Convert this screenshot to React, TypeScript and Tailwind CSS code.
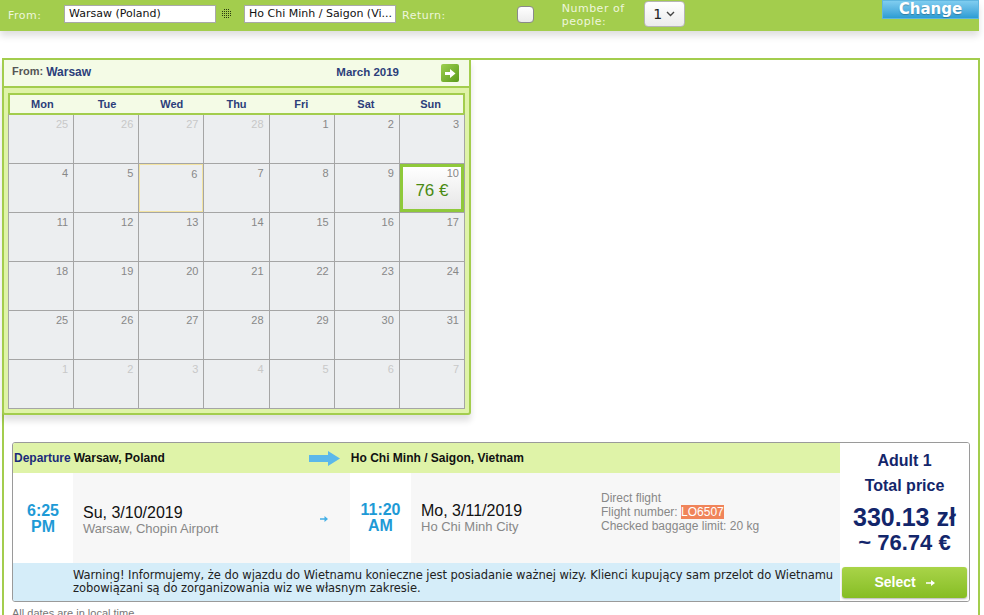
const verdana = "font-['DejaVu_Sans',Verdana,sans-serif]";
const arial = "font-['Liberation_Sans',Arial,sans-serif]";

const dayNames = ["Mon", "Tue", "Wed", "Thu", "Fri", "Sat", "Sun"];

type Day = { n: number; other?: boolean; price?: string; today?: boolean };

const weeks: Day[][] = [
  [{ n: 25, other: true }, { n: 26, other: true }, { n: 27, other: true }, { n: 28, other: true }, { n: 1 }, { n: 2 }, { n: 3 }],
  [{ n: 4 }, { n: 5 }, { n: 6, today: true }, { n: 7 }, { n: 8 }, { n: 9 }, { n: 10, price: "76 €" }],
  [{ n: 11 }, { n: 12 }, { n: 13 }, { n: 14 }, { n: 15 }, { n: 16 }, { n: 17 }],
  [{ n: 18 }, { n: 19 }, { n: 20 }, { n: 21 }, { n: 22 }, { n: 23 }, { n: 24 }],
  [{ n: 25 }, { n: 26 }, { n: 27 }, { n: 28 }, { n: 29 }, { n: 30 }, { n: 31 }],
  [{ n: 1, other: true }, { n: 2, other: true }, { n: 3, other: true }, { n: 4, other: true }, { n: 5, other: true }, { n: 6, other: true }, { n: 7, other: true }],
];

function SwapDots() {
  const dots: [number, number][] = [];
  for (let y = 0; y < 5; y++) {
    for (let x = 0; x < 5; x++) {
      if (Math.abs(x - 2) + Math.abs(y - 2) <= 3) dots.push([x, y]);
    }
  }
  return (
    <svg width="11" height="11" viewBox="0 0 11 11">
      {dots.map(([x, y]) => (
        <rect key={`${x}-${y}`} x={1 + x * 2} y={1 + y * 2} width="1" height="1" fill="#2b3a10" />
      ))}
    </svg>
  );
}

function TopBar() {
  return (
    <div className={`${verdana} relative h-[31px] w-[979px] bg-[#a3cd4d] text-[11px] shadow-[0_5px_7px_rgba(0,0,0,0.13)]`}>
      <div className="flex h-full items-start pt-[5px]">
        <span className="ml-[8px] mt-[3px] w-[56px] tracking-[0.5px] text-[#eef6dc]">From:</span>
        <div className="flex h-[18px] w-[152px] items-center border border-[#a9a9a9] bg-white pl-[4px] text-[#111]">Warsaw (Poland)</div>
        <div className="mx-[5px] mt-[3px] w-[18px]">
          <SwapDots />
        </div>
        <div className="flex h-[18px] w-[152px] items-center border border-[#a9a9a9] bg-white pl-[4px] text-[#111]">Ho Chi Minh / Saigon (Vi...</div>
        <span className="ml-[6px] mt-[3px] tracking-[0.5px] text-[#eef6dc]">Return:</span>
        <div className="ml-[71px] mt-[1px] h-[17px] w-[17px] rounded-[4px] border border-[#8a8a8a] bg-gradient-to-b from-white to-[#ececec]" />
        <span className="ml-[28px] -mt-[3px] w-[70px] leading-[13px] tracking-[0.5px] text-[#eef6dc]">Number of people:</span>
        <div className="ml-[12px] -mt-[4px] flex h-[26px] w-[41px] items-center justify-center gap-[4px] rounded-[4px] border border-[#b5b5b5] bg-gradient-to-b from-white to-[#ececec] text-[14px] text-[#222]">
          <span>1</span>
          <svg width="9" height="6" viewBox="0 0 9 6">
            <path d="M1 1l3.5 3.5L8 1" fill="none" stroke="#444" strokeWidth="1.4" />
          </svg>
        </div>
        <div className="ml-auto -mt-[5px] flex h-[19px] w-[97px] items-center justify-center border border-[#5fb6e0] bg-gradient-to-b from-[#7fcdf0] to-[#2a9dd4] text-[15px] font-bold text-white [text-shadow:0_1px_1px_rgba(0,0,0,0.25)]">
          Change
        </div>
      </div>
    </div>
  );
}

function Calendar() {
  return (
    <div className={`${arial} -ml-[2px] -mt-[2px] w-[469px] rounded-b-[3px] border-2 border-[#a3cd4d] bg-[#dff3a8] shadow-[0_6px_6px_rgba(0,0,0,0.12)]`}>
      <div className="flex h-[28px] items-center border-b-2 border-[#a3cd4d] bg-[#f4fbe6] pl-[8px] pr-[10px]">
        <span className="-mt-[3px] text-[11px] font-bold text-[#555]">From: </span>
        <span className="-mt-[3px] ml-[3px] text-[12px] font-bold text-[#2c3e7a]">Warsaw</span>
        <span className="ml-auto text-[11.5px] font-bold text-[#2c3e7a]">March 2019</span>
        <div className="ml-[42px] flex h-[18px] w-[18px] items-center justify-center rounded-[2px] bg-gradient-to-br from-[#9ed04e] to-[#5a9a1a]">
          <svg width="11" height="9" viewBox="0 0 11 9">
            <path d="M0 3h5V0l5.5 4.5L5 9V6H0z" fill="white" />
          </svg>
        </div>
      </div>
      <div className="px-[4px] pb-[4px] pt-[5px]">
        <div className="grid h-[20px] grid-cols-7 items-center border-2 border-b-0 border-[#a3cd4d] bg-[#f4fbe6] text-center text-[11px] font-bold text-[#2c3e7a]">
          {dayNames.map((d) => (
            <span key={d}>{d}</span>
          ))}
        </div>
        <div className="grid grid-cols-7 gap-px border border-t-2 border-[#a5a5a5] border-t-[#a3cd4d] bg-[#a5a5a5]">
          {weeks.flat().map((d, i) =>
            d.price ? (
              <div key={i} className="flex h-[48px] flex-col border-[3px] border-[#8fc93a] bg-gradient-to-b from-white to-[#e6e6e6] px-[2px]">
                <span className="text-right text-[11px] leading-[13px] text-[#888]">{d.n}</span>
                <span className="mt-[1px] text-center text-[17px] leading-[20px] text-[#4a8a12]">{d.price}</span>
              </div>
            ) : (
              <div
                key={i}
                className={`h-[48px] bg-[#eceef0] pr-[5px] pt-[3px] text-right text-[11px] leading-[13px] ${d.other ? "text-[#c8c8c8]" : "text-[#888]"} ${d.today ? "border border-[#f3e3a0]" : ""}`}
              >
                {d.n}
              </div>
            )
          )}
        </div>
      </div>
    </div>
  );
}

function FlightCard() {
  return (
    <div className={`${arial} ml-[8px] mt-[27px] flex w-[958px] overflow-hidden rounded-[3px] border border-[#9a9a9a]`}>
      <div className="flex w-[827px] flex-col">
        <div className="flex h-[30px] items-center bg-[#dff3a8] text-[12px] font-bold">
          <span className="ml-[1px] text-[#1a2a7a]">Departure</span>
          <span className="ml-[3px] text-[#111]">Warsaw, Poland</span>
          <svg className="ml-[144px]" width="31" height="15" viewBox="0 0 31 15">
            <path d="M0 4h19V0l12 7.5L19 15v-4H0z" fill="#5bb8ea" />
          </svg>
          <span className="ml-[11px] text-[#111]">Ho Chi Minh / Saigon, Vietnam</span>
        </div>
        <div className="flex h-[90px]">
          <div className="flex w-[60px] flex-col items-center justify-center bg-white pt-[2px] text-[16px] font-bold leading-[16px] text-[#1e9ad6]">
            <span>6:25</span>
            <span>PM</span>
          </div>
          <div className="flex w-[277px] items-center bg-[#f7f7f7] pl-[10px]">
            <div className="flex flex-col pt-[3px]">
              <span className="text-[16px] leading-[17px] text-[#111]">Su, 3/10/2019</span>
              <span className="text-[13px] leading-[15px] text-[#888]">Warsaw, Chopin Airport</span>
            </div>
            <svg className="ml-auto mr-[22px] mt-[1px]" width="8" height="8" viewBox="0 0 8 8">
              <path d="M0 3.2h4.5V1L8 4 4.5 7V4.8H0z" fill="#45b0e6" />
            </svg>
          </div>
          <div className="flex w-[61px] flex-col items-center justify-center bg-white text-[16px] font-bold leading-[16px] text-[#1e9ad6]">
            <span>11:20</span>
            <span>AM</span>
          </div>
          <div className="flex flex-1 items-start bg-[#f7f7f7] pl-[10px]">
            <div className="mt-[29px] flex w-[180px] flex-col">
              <span className="text-[16px] leading-[17px] text-[#111]">Mo, 3/11/2019</span>
              <span className="text-[13px] leading-[15px] text-[#888]">Ho Chi Minh City</span>
            </div>
            <div className="mt-[18px] flex flex-col text-[12px] leading-[14px] text-[#888]">
              <span>Direct flight</span>
              <span>
                Flight number: <span className="bg-[#f0845a] text-white">LO6507</span>
              </span>
              <span>Checked baggage limit: 20 kg</span>
            </div>
          </div>
        </div>
        <div className={`${verdana} flex h-[38px] items-center bg-[#d5edf9] pl-[60px] text-[11.5px] leading-[13px] text-[#222]`}>
          <p className="w-[767px] shrink-0 tracking-[-0.05px]">
            Warning! Informujemy, że do wjazdu do Wietnamu konieczne jest posiadanie ważnej wizy. Klienci kupujący sam przelot do Wietnamu zobowiązani są do zorganizowania wiz we własnym zakresie.
          </p>
        </div>
      </div>
      <div className="flex flex-1 flex-col items-center bg-white font-bold text-[#13266b]">
        <span className="mt-[9px] text-[16px] leading-[18px]">Adult 1</span>
        <span className="mt-[7px] text-[16px] leading-[18px]">Total price</span>
        <span className="mt-[8px] text-[25px] leading-[28px]">330.13 zł</span>
        <span className="-mt-[1px] text-[22px] leading-[26px]">~ 76.74 €</span>
        <div className="mt-[11px] flex h-[31px] w-[125px] items-center justify-center gap-[10px] rounded-[3px] bg-gradient-to-b from-[#a9d448] to-[#86bd22] text-[14px] font-bold text-white shadow-[0_1px_2px_rgba(0,0,0,0.3)]">
          <span>Select</span>
          <svg width="9" height="8" viewBox="0 0 9 8">
            <path d="M0 3.2h5V1l4 3-4 3V4.8H0z" fill="white" />
          </svg>
        </div>
      </div>
    </div>
  );
}

export default function App() {
  return (
    <div className="min-h-[615px] w-[984px] overflow-hidden bg-white">
      <TopBar />
      <div className="ml-[2px] mt-[27px] h-[600px] w-[978px] border-2 border-[#a3cd4d]">
        <Calendar />
        <FlightCard />
        <p className={`${arial} ml-[8px] mt-[3px] text-[11px] text-[#777]`}>All dates are in local time</p>
      </div>
    </div>
  );
}
